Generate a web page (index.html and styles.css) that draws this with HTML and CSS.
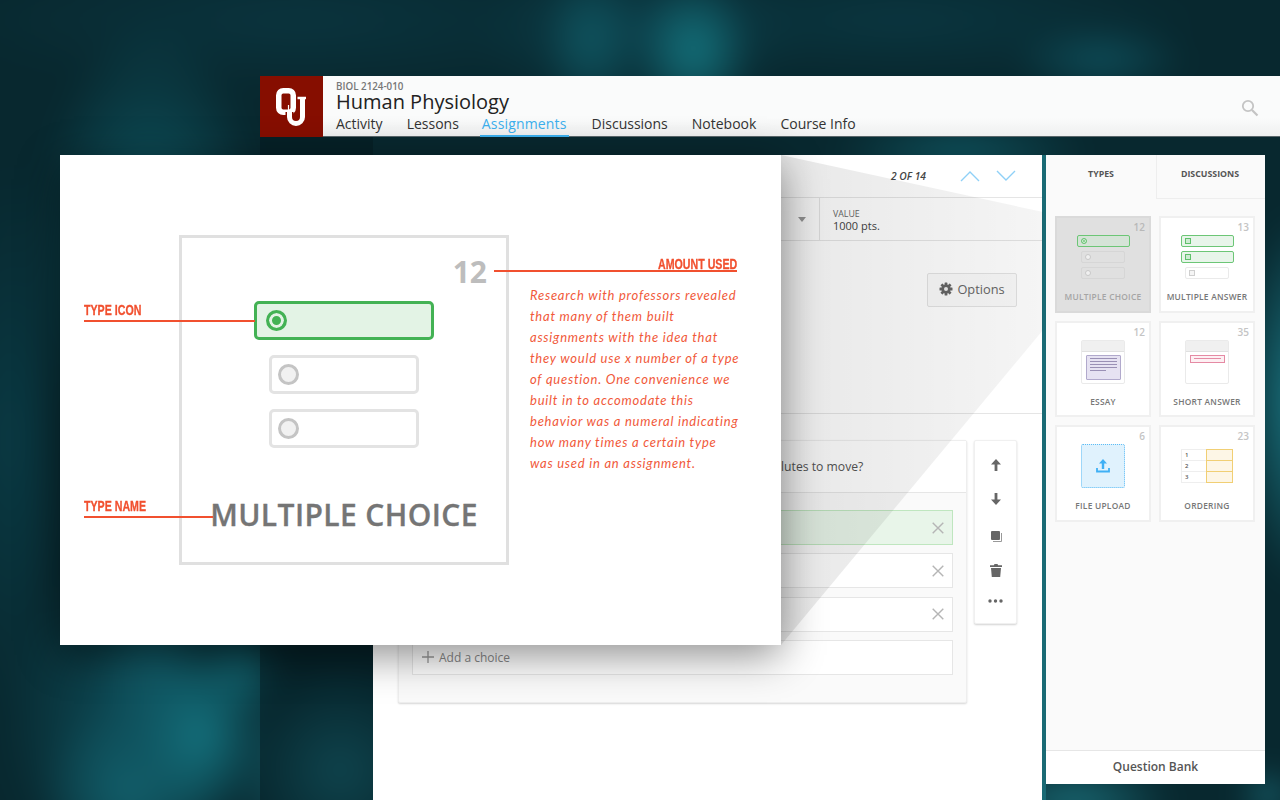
FILE: index.html
```html
<!DOCTYPE html>
<html lang="en">
<head>
<meta charset="utf-8">
<title>Human Physiology</title>
<link rel="stylesheet" href="styles.css">
</head>
<body>
<div class="backdrop"></div>
<div class="app">
  <header class="topbar">
    <div class="logo">
      <svg width="34" height="40" viewBox="0 0 34 40">
        <rect x="3.750" y="3.750" width="14.500" height="21.500" rx="4.500" fill="none" stroke="#fff" stroke-width="5.500"/>
        <path d="M13.500 18v9" stroke="#fff" stroke-width="1.200"/>
        <path d="M14.500 25v5a6.500 6.500 0 0 0 13 0V12" fill="none" stroke="#860e00" stroke-width="8"/>
        <path d="M14.500 24v6a6.500 6.500 0 0 0 13 0V12" fill="none" stroke="#fff" stroke-width="5"/>
        <path d="M22.500 11h8.500" stroke="#fff" stroke-width="2.500"/>
      </svg>
    </div>
    <div class="course">
      <div class="code">BIOL 2124-010</div>
      <div class="title">Human Physiology</div>
      <nav class="nav">
        <span class="tab">Activity</span>
        <span class="tab">Lessons</span>
        <span class="tab active">Assignments</span>
        <span class="tab">Discussions</span>
        <span class="tab">Notebook</span>
        <span class="tab">Course Info</span>
      </nav>
    </div>
    <svg class="search" width="18" height="18" viewBox="0 0 18 18"><circle cx="7" cy="7" r="5.200" fill="none" stroke="#c4c4c4" stroke-width="1.800"/><path d="M11 11l5.500 5.500" stroke="#c4c4c4" stroke-width="2.200"/></svg>
  </header>
  <div class="workspace">
    <div class="rail"></div>
    <main class="editor">
      <div class="pager">
        <span class="count">2 OF 14</span>
        <svg width="20" height="12" viewBox="0 0 20 12"><path d="M1 11l9-9 9 9" fill="none" stroke="#8fd0f7" stroke-width="1.400"/></svg>
        <svg width="20" height="12" viewBox="0 0 20 12"><path d="M1 1l9 9 9-9" fill="none" stroke="#8fd0f7" stroke-width="1.400"/></svg>
      </div>
      <div class="meta">
        <i class="caret"></i>
        <div class="value"><div class="vlabel">VALUE</div><div class="vnum">1000 pts.</div></div>
      </div>
      <div class="optrow">
        <div class="options">
          <svg width="14" height="14" viewBox="0 0 14 14"><g fill="#666"><circle cx="7" cy="7" r="4.600"/><rect x="5.600" y="0.500" width="2.800" height="13" rx=".5"/><rect x="0.500" y="5.600" width="13" height="2.800" rx=".5"/><rect x="5.600" y="0.500" width="2.800" height="13" rx=".5" transform="rotate(45 7 7)"/><rect x="5.600" y="0.500" width="2.800" height="13" rx=".5" transform="rotate(-45 7 7)"/></g><circle cx="7" cy="7" r="2" fill="#eee"/></svg>
          <span>Options</span>
        </div>
      </div>
      <div class="stage">
        <section class="qcard">
          <div class="qtext">lutes to move?</div>
          <div class="choices">
            <div class="choice correct"><svg class="x" width="12" height="12" viewBox="0 0 12 12"><path d="M.7.7l10.600 10.600M11.300.7L.7 11.300" stroke="#b5b5b5" stroke-width="1.400"/></svg></div>
            <div class="choice"><svg class="x" width="12" height="12" viewBox="0 0 12 12"><path d="M.7.7l10.600 10.600M11.300.7L.7 11.300" stroke="#b5b5b5" stroke-width="1.400"/></svg></div>
            <div class="choice"><svg class="x" width="12" height="12" viewBox="0 0 12 12"><path d="M.7.7l10.600 10.600M11.300.7L.7 11.300" stroke="#b5b5b5" stroke-width="1.400"/></svg></div>
            <div class="choice add">
              <svg width="12" height="12" viewBox="0 0 12 12"><path d="M6 0v12M0 6h12" stroke="#9a9a9a" stroke-width="1.300"/></svg>
              <span>Add a choice</span>
            </div>
          </div>
        </section>
        <aside class="tools">
          <svg width="12" height="12" viewBox="0 0 12 12"><path d="M6 0l5 5.500H7.400V12H4.600V5.500H1z" fill="#666"/></svg>
          <svg class="tool-gap" width="12" height="12" viewBox="0 0 12 12"><path d="M4.600 0h2.800v6.500H11L6 12 1 6.500h3.600z" fill="#666"/></svg>
          <svg width="12" height="12" viewBox="0 0 12 12"><rect x="1" y="1" width="9" height="9" rx="1" fill="#666"/><path d="M11.500 3v8.500H3" fill="none" stroke="#999" stroke-width="1"/></svg>
          <svg width="12" height="13" viewBox="0 0 12 13"><path d="M4.500 0h3l.6 1.300H12v1.700H0V1.300h3.900zM1 4h10l-.8 9H1.800z" fill="#666"/></svg>
          <svg width="15" height="4" viewBox="0 0 15 4"><g fill="#666"><circle cx="2" cy="2" r="1.700"/><circle cx="7.500" cy="2" r="1.700"/><circle cx="13" cy="2" r="1.700"/></g></svg>
        </aside>
      </div>
    </main>
    <div class="gutter"></div>
    <aside class="sidebar">
      <div class="stabs"><div class="stab current">TYPES</div><div class="stab">DISCUSSIONS</div></div>
      <div class="tiles">
        <div class="tile selected"><span class="num">12</span>
          <div class="icon stack">
            <div class="opt on wide"><i class="dot"></i></div><div class="opt"><i class="dot"></i></div><div class="opt"><i class="dot"></i></div>
          </div>
          <div class="name">MULTIPLE CHOICE</div></div>
        <div class="tile"><span class="num">13</span>
          <div class="icon stack">
            <div class="opt on wide"><i class="sq"></i></div><div class="opt on wide"><i class="sq"></i></div><div class="opt"><i class="sq"></i></div>
          </div>
          <div class="name">MULTIPLE ANSWER</div></div>
        <div class="tile"><span class="num">12</span>
          <div class="icon sheet"><div class="sheet-head"></div>
            <div class="essay"><i></i><i></i><i></i><i></i><i class="short"></i></div></div>
          <div class="name">ESSAY</div></div>
        <div class="tile"><span class="num">35</span>
          <div class="icon sheet"><div class="sheet-head"></div><div class="answer"><i></i></div></div>
          <div class="name">SHORT ANSWER</div></div>
        <div class="tile"><span class="num">6</span>
          <div class="icon upload"><svg width="14" height="14" viewBox="0 0 14 14"><path d="M7 0l4 4.500H8.200V10H5.800V4.500H3z" fill="#3fb0f5"/><path d="M1 9v3.500h12V9" fill="none" stroke="#3fb0f5" stroke-width="1.800"/></svg></div>
          <div class="name">FILE UPLOAD</div></div>
        <div class="tile"><span class="num">23</span>
          <div class="icon order">
            <div class="orow"><b>1</b><i></i></div><div class="orow"><b>2</b><i></i></div><div class="orow"><b>3</b><i></i></div>
          </div>
          <div class="name">ORDERING</div></div>
      </div>
      <div class="bank">Question Bank</div>
    </aside>
  </div>
</div>

<svg class="cone" width="1280" height="800" viewBox="0 0 1280 800">
  <defs><linearGradient id="coneFill" x1="0" x2="1" y1="0" y2="0"><stop offset="0" stop-color="#000" stop-opacity=".09"/><stop offset="1" stop-color="#000" stop-opacity=".04"/></linearGradient></defs>
  <polygon points="781,155 1043,212 1043,330 781,645" fill="url(#coneFill)"/>
</svg>

<section class="callout">
  <div class="specimen">
    <span class="bignum">12</span>
    <div class="bigopt on"><i class="bigdot"></i></div>
    <div class="bigopt"><i class="bigdot"></i></div>
    <div class="bigopt"><i class="bigdot"></i></div>
    <div class="bigname">MULTIPLE CHOICE</div>
  </div>
  <div class="label l-icon"><span>TYPE ICON</span></div>
  <div class="label l-name"><span>TYPE NAME</span></div>
  <div class="label l-amount"><span>AMOUNT USED</span></div>
  <p class="note">
    <span>Research with professors revealed</span>
    <span>that many of them built</span>
    <span>assignments with the idea that</span>
    <span>they would use x number of a type</span>
    <span>of question. One convenience we</span>
    <span>built in to accomodate this</span>
    <span>behavior was a numeral indicating</span>
    <span>how many times a certain type</span>
    <span>was used in an assignment.</span>
  </p>
</section>
</body>
</html>
```

FILE: styles.css
```css
* { box-sizing: border-box; }
html, body { margin: 0; height: 100%; }
body {
  width: 1280px; height: 800px; overflow: hidden; position: relative;
  background: #08282f;
  font-family: "Open Sans", "Liberation Sans", sans-serif;
  color: #3c3c3c;
  padding: 76px 0 0 260px;
}
/* extends 40px past the window so the blur has no faded edge; gradient positions carry that offset */
.backdrop {
  position: absolute; left: -40px; top: -40px; width: 1360px; height: 880px;
  filter: blur(14px);
  background:
    radial-gradient(ellipse 62px 82px at 240px 775px, #14727e, transparent),
    radial-gradient(ellipse 90px 90px at 170px 830px, #125f6b, transparent),
    radial-gradient(ellipse 62px 66px at 195px 710px, #115a66, transparent),
    radial-gradient(ellipse 50px 50px at 280px 712px, #11606b, transparent),
    radial-gradient(ellipse 140px 170px at 180px 760px, #0e4f5b, transparent),
    radial-gradient(ellipse 110px 110px at 380px 810px, #1a6f7c, transparent),
    radial-gradient(ellipse 115px 230px at 190px 290px, #0f5c68, transparent),
    radial-gradient(ellipse 70px 280px at 50px 480px, #0a3a44, transparent),
    radial-gradient(ellipse 60px 72px at 734px 90px, #14727c, transparent),
    radial-gradient(ellipse 50px 72px at 630px 80px, #0f5560, transparent),
    radial-gradient(ellipse 170px 85px at 680px 70px, #0c3f4a, transparent),
    radial-gradient(ellipse 90px 36px at 1140px 100px, #0e4e5a, transparent),
    radial-gradient(ellipse 130px 30px at 1000px 190px, #0f5560, transparent),
    radial-gradient(ellipse 360px 70px at 340px 60px, #0a343e, transparent),
    radial-gradient(ellipse 300px 60px at 940px 60px, #0a3640, transparent),
    radial-gradient(ellipse 60px 190px at 1340px 440px, #1c7a86, transparent),
    radial-gradient(ellipse 100px 36px at 1115px 840px, #1b6f7a, transparent),
    radial-gradient(ellipse 30px 28px at 1308px 835px, #186470, transparent),
    #08282f;
}

.app { position: relative; width: 1020px; }
.topbar { height: 61px; background: linear-gradient(#fafbfb 70%, #eff0f0); border-bottom: 1px solid #59666a; display: flex; }
.logo { width: 63px; height: 61px; margin-bottom: -1px; background: #860e00; display: flex; align-items: center; justify-content: center; }
.course { padding: 5px 0 0 13px; flex: 1; }
.code { font-size: 9.800px; font-weight: 600; line-height: 11px; color: #777; }
.title { font-size: 20px; line-height: 22px; color: #222; margin-top: -1px; }
.nav { display: flex; gap: 20px; margin-top: 2px; }
.tab { font-size: 14px; line-height: 18px; height: 22px; color: #333; margin-right: 4px; white-space: nowrap; }
.active { color: #3cb0ee; border-bottom: 2px solid #3cb0ee; padding: 0 2px; margin: 0 3px 0 -3px; letter-spacing: .16px; }
.search { position: absolute; left: 981px; top: 23px; }

.workspace { display: flex; height: 663px; }
.rail { width: 113px; background: rgba(4, 26, 32, .5); }
.editor { width: 669px; margin-top: 18px; background: #fff; }
.gutter { width: 4px; margin-top: 18px; background: #1a6a74; }
.pager { height: 43px; display: flex; align-items: center; justify-content: flex-end; gap: 16px; padding-right: 26px; border-bottom: 1px solid #e5e5e5; }
.count { font-size: 10.300px; font-weight: 600; font-style: italic; color: #444; margin-right: 18px; }
.meta { height: 43px; border-bottom: 1px solid #e5e5e5; display: flex; justify-content: flex-end; align-items: center; }
.caret { width: 0; height: 0; border: 4px solid transparent; border-top: 5px solid #999; border-bottom: 0; margin-right: 13px; }
.value { width: 223px; height: 42px; border-left: 1px solid #e5e5e5; padding: 11px 0 0 13px; }
.vlabel { font-size: 8.800px; line-height: 10px; color: #666; }
.vnum { font-size: 11px; line-height: 14px; color: #444; }
.optrow { height: 173px; border-bottom: 1px solid #e5e5e5; display: flex; justify-content: flex-end; padding: 32px 25px 0 0; }
.options { width: 90px; height: 34px; border: 1px solid #e3e3e3; border-radius: 2px; background: #fafafa; display: flex; align-items: center; justify-content: center; gap: 4px; font-size: 12.800px; line-height: 16px; color: #666; padding-bottom: 2px; }
.stage { display: flex; padding: 26px 0 0 25px; gap: 7px; align-items: flex-start; }
.qcard { width: 569px; height: 263px; background: #fafafa; border: 1px solid #eee; border-radius: 2px; box-shadow: 0 1px 2px rgba(0,0,0,.16); }
.qtext { height: 52px; background: #fff; border-bottom: 1px solid #e6e6e6; padding: 17px 0 0 382px; font-size: 12.200px; line-height: 18px; color: #555; }
.choices { padding: 17px 13px 0 13px; display: flex; flex-direction: column; gap: 8.330px; }
.choice { height: 35px; background: #fff; border: 1px solid #e6e6e6; display: flex; align-items: center; justify-content: flex-end; padding-right: 8px; }
.correct { background: #e8f5e9; border-color: #bfe6bf; }
.add { justify-content: flex-start; padding-left: 9px; gap: 5px; font-size: 12px; color: #888; }
.tools { width: 43px; height: 184px; background: #fff; border: 1px solid #f0f0f0; border-radius: 2px; box-shadow: 0 1px 2px rgba(0,0,0,.18); display: flex; flex-direction: column; align-items: center; gap: 22px; padding-top: 18px; }
.tool-gap { margin-bottom: 3px; }

.sidebar { width: 219px; height: 629px; margin-top: 18px; background: #fafafa; display: flex; flex-direction: column; }
.stabs { display: flex; height: 44px; }
.stab { flex: 1; font-size: 8.800px; font-weight: 700; color: #555; padding: 14px 2px 0 0; text-align: center; line-height: 10px; border-bottom: 1px solid #eee; }
.stab.current { flex: 0 0 111px; padding-right: 0; border-right: 1px solid #eee; border-bottom: 0; }
.tiles { flex: 1; display: grid; grid-template-columns: 96px 96px; grid-auto-rows: 96.500px; gap: 8px; padding: 17px 0 0 9px; }
.tile { position: relative; background: #fff; border: 2px solid #f0f0f0; display: flex; flex-direction: column; align-items: center; padding-top: 17px; }
.selected { background: #e0e0e0; border-color: #dadada; }
.num { position: absolute; right: 4px; top: 3px; font-size: 10px; font-weight: 600; color: #c4c4c4; line-height: 12px; }
.selected .num { color: #b8b8b8; }
.name { position: absolute; left: 0; right: 0; top: 73px; text-align: center; font-size: 8.400px; font-weight: 600; color: #777; line-height: 12px; letter-spacing: .25px; white-space: nowrap; }
.selected .name { color: #a5a5a5; }
.icon { width: 53px; height: 44px; }
.stack { display: flex; flex-direction: column; align-items: center; gap: 4px; }
.opt { width: 44px; height: 12px; border: 1px solid #eaeaea; border-radius: 2px; display: flex; align-items: center; padding-left: 3px; flex: none; }
.selected .opt { border-color: #d6d6d6; }
.opt.wide { width: 53px; }
.opt.on { border-color: #6cc676; background: #e8f5ea; }
.selected .opt.on { background: #d5e3d7; }
.dot { width: 6px; height: 6px; border-radius: 50%; border: 1px solid #c8c8c8; background: #f0f0f0; }
.on .dot { border-color: #6cc676; background: #6cc676; box-shadow: inset 0 0 0 1px #e8f5ea; }
.sq { width: 6px; height: 6px; border: 1px solid #cfcfcf; background: #f5f5f5; }
.on .sq { border-color: #5fc06b; background: #cdebd1; }
.sheet { width: 44px; height: 44px; border: 1px solid #eaeaea; border-radius: 2px; }
.sheet-head { height: 11px; background: #f0f0f0; border-bottom: 1px solid #e0e0e0; }
.essay { width: 35px; height: 25px; margin: 3px 4px; background: #e6e2f2; border: 1px solid #b1a9cc; display: flex; flex-direction: column; padding: 2px 3px; gap: 2px; border-radius: 1px; }
.essay i { height: 1px; background: #9a90b5; }
.essay i.short { width: 60%; }
.answer { height: 8px; width: 35px; margin: 3px 4px; border: 1px solid #e58aa4; background: #fdf0f3; padding: 2px 3px; }
.answer i { display: block; height: 1px; background: #e58aa4; }
.upload { width: 44px; height: 44px; border: 1px dotted #5cbcf5; background: #e0f2fd; border-radius: 2px; display: flex; align-items: center; justify-content: center; }
.order { width: 52px; height: 33px; margin-top: 6px; display: flex; flex-direction: column; }
.orow { flex: 1; display: flex; border: 1px solid #eee; border-right: 0; margin-top: -1px; }
.orow b { flex: 1; font-size: 6px; font-weight: 600; color: #555; padding-left: 3px; line-height: 10px; }
.orow i { width: 27px; background: #fdf6e6; border: 1px solid #f1cf74; margin: -1px 0; }
.bank { height: 34px; background: #fff; border-top: 1px solid #e6e6e6; text-align: center; font-size: 12px; font-weight: 600; color: #555; line-height: 32px; }

.cone { position: absolute; left: 0; top: 0; pointer-events: none; }
.callout { position: absolute; left: 60px; top: 155px; width: 721px; height: 490px; background: #fff; box-shadow: 0 10px 40px rgba(0,0,0,.45); }
.specimen { position: absolute; left: 119px; top: 80px; width: 330px; height: 330px; border: 3px solid #e0e0e0; display: flex; flex-direction: column; align-items: center; padding-top: 63px; }
.bignum { position: absolute; right: 19px; top: 16px; font-size: 30px; font-weight: 700; line-height: 36px; color: #bdbdbd; }
.bigopt { width: 150px; height: 39px; border: 3px solid #e3e3e3; border-radius: 5px; margin-bottom: 15px; display: flex; align-items: center; padding-left: 6px; }
.bigopt.on { width: 180px; background: #e3f3e5; border-color: #43b254; padding-left: 9px; }
.bigdot { width: 21px; height: 21px; border-radius: 50%; background: #f1f1f1; border: 3px solid #c4c4c4; }
.on .bigdot { border-color: #43b254; background: #43b254; box-shadow: inset 0 0 0 3px #e3f3e5; }
.bigname { position: absolute; left: 0; right: 0; top: 257px; text-align: center; font-size: 30px; font-weight: 600; line-height: 40px; color: #757575; letter-spacing: .4px; white-space: nowrap; -webkit-text-stroke: .3px #757575; }
.label { position: absolute; border-bottom: 2px solid #f1502f; color: #f1502f; font-family: "Liberation Sans", sans-serif; font-weight: 700; font-size: 14px; line-height: 14px; white-space: nowrap; }
.label span { display: inline-block; transform: scaleX(.76); transform-origin: 0 50%; -webkit-text-stroke: .3px #f1502f; }
.l-icon { left: 24px; top: 148px; width: 171px; height: 19px; }
.l-name { left: 24px; top: 344px; width: 129px; height: 19px; }
.l-amount { left: 434px; top: 102px; width: 243px; height: 15px; text-align: right; }
.l-amount span { transform-origin: 100% 50%; }
.note { position: absolute; left: 470px; top: 130px; margin: 0; font-family: "Lato", "Open Sans", sans-serif; font-style: italic; font-size: 13px; line-height: 21px; letter-spacing: .76px; color: #f1593a; white-space: nowrap; }
.note span { display: block; }
```
